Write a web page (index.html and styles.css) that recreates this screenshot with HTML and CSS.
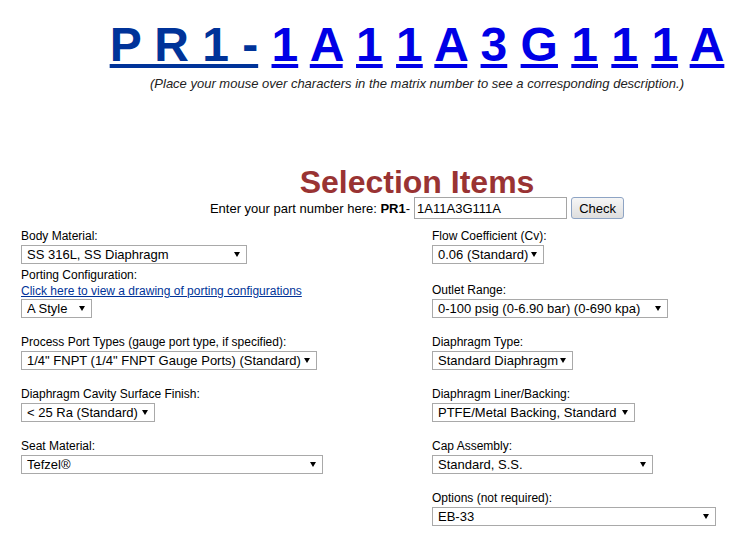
FILE: index.html
```html
<!DOCTYPE html>
<html lang="en">
<head>
  <meta charset="UTF-8" />
  <meta name="viewport" content="width=device-width, initial-scale=1.0" />
  <title>PR1 Part Number Selection</title>
  <link rel="stylesheet" href="styles.css">
</head>
<body>
  <div class="page">
    <div class="top">
      <div class="matrix">
        <a href="#" class="prefix">P R 1 -</a>
        <a href="#">1</a>
        <a href="#">A</a>
        <a href="#">1</a>
        <a href="#">1</a>
        <a href="#">A</a>
        <a href="#">3</a>
        <a href="#">G</a>
        <a href="#">1</a>
        <a href="#">1</a>
        <a href="#">1</a>
        <a href="#">A</a>
      </div>
      <p class="hint">(Place your mouse over characters in the matrix number to see a corresponding description.)</p>

      <h1 class="title">Selection Items</h1>
      <form class="part-form" onsubmit="return false;">
        <span>Enter your part number here: <b>PR1</b>-</span>
        <input type="text" id="part-number" value="1A11A3G111A" />
        <button type="button">Check</button>
      </form>
    </div>

    <div class="fields">
      <!-- row 1 -->
      <div class="cell">
        <div class="field">
          <label>Body Material:</label>
          <span class="dd"><select class="w-body"><option>SS 316L, SS Diaphragm</option></select></span>
        </div>
        <div class="field porting">
          <label>Porting Configuration:</label>
          <a href="#" class="drawing">Click here to view a drawing of porting configurations</a>
          <span class="dd"><select class="w-style"><option>A Style</option></select></span>
        </div>
      </div>
      <div class="cell">
        <div class="field">
          <label>Flow Coefficient (Cv):</label>
          <span class="dd"><select class="w-flow"><option>0.06 (Standard)</option></select></span>
        </div>
        <div class="field outlet">
          <label>Outlet Range:</label>
          <span class="dd"><select class="w-outlet"><option>0-100 psig (0-6.90 bar) (0-690 kpa)</option></select></span>
        </div>
      </div>

      <!-- row 2 -->
      <div class="cell">
        <div class="field">
          <label>Process Port Types (gauge port type, if specified):</label>
          <span class="dd"><select class="w-process"><option>1/4" FNPT (1/4" FNPT Gauge Ports) (Standard)</option></select></span>
        </div>
      </div>
      <div class="cell">
        <div class="field">
          <label>Diaphragm Type:</label>
          <span class="dd"><select class="w-dtype"><option>Standard Diaphragm</option></select></span>
        </div>
      </div>

      <!-- row 3 -->
      <div class="cell">
        <div class="field">
          <label>Diaphragm Cavity Surface Finish:</label>
          <span class="dd"><select class="w-cavity"><option>&lt; 25 Ra (Standard)</option></select></span>
        </div>
      </div>
      <div class="cell">
        <div class="field">
          <label>Diaphragm Liner/Backing:</label>
          <span class="dd"><select class="w-liner"><option>PTFE/Metal Backing, Standard</option></select></span>
        </div>
      </div>

      <!-- row 4 -->
      <div class="cell">
        <div class="field">
          <label>Seat Material:</label>
          <span class="dd"><select class="w-seat"><option>Tefzel®</option></select></span>
        </div>
      </div>
      <div class="cell">
        <div class="field">
          <label>Cap Assembly:</label>
          <span class="dd"><select class="w-cap"><option>Standard, S.S.</option></select></span>
        </div>
      </div>

      <!-- row 5 -->
      <div class="cell"></div>
      <div class="cell">
        <div class="field">
          <label>Options (not required):</label>
          <span class="dd"><select class="w-options"><option>EB-33</option></select></span>
        </div>
      </div>
    </div>
  </div>
</body>
</html>
```

FILE: styles.css
```css
body {
  margin: 8px;
  background-color: #fff;
  color: #000;
  font-family: "Liberation Sans", Arial, sans-serif;
}
.page {
  width: 724px;
}
.top {
  padding-left: 94px;
}
.matrix {
  padding-top: 9px;
  text-align: center;
  font-size: 48px;
  font-weight: bold;
  white-space: nowrap;
}
.matrix a {
  color: #0000e6;
}
.matrix a.prefix {
  color: #003399;
}
.hint {
  margin: 4px 0 0;
  text-align: center;
  font-size: 13px;
  font-style: italic;
  color: #222;
  white-space: nowrap;
}
.title {
  margin: 75px 0 0;
  text-align: center;
  font-size: 32px;
  line-height: 32px;
  color: #993333;
}
.part-form {
  display: flex;
  justify-content: center;
  align-items: center;
  gap: 4px;
  margin: -1px 0 0;
  font-size: 13px;
}
.part-form input {
  box-sizing: border-box;
  width: 153px;
  height: 22px;
  padding: 0 2px;
  border: 1px solid #a5a5a5;
  font-family: "Liberation Sans", Arial, sans-serif;
  font-size: 13px;
  color: #000;
}
.part-form button {
  box-sizing: border-box;
  width: 53px;
  height: 22px;
  padding: 0;
  border: 1px solid #8ea4c4;
  border-radius: 3px;
  background: linear-gradient(#f6f6f6, #dedede);
  font-family: "Liberation Sans", Arial, sans-serif;
  font-size: 13px;
  color: #000;
  cursor: pointer;
}
.fields {
  display: grid;
  grid-template-columns: 411px 1fr;
  row-gap: 17px;
  align-items: end;
  margin-top: 10px;
  padding-left: 13px;
}
.cell {
  display: flex;
  flex-direction: column;
}
.field {
  display: flex;
  flex-direction: column;
  align-items: flex-start;
}
.field label {
  font-size: 12px;
  line-height: 15px;
  margin-bottom: 1px;
}
.porting {
  margin-top: 4px;
}
.outlet {
  margin-top: 19px;
}
.drawing {
  font-size: 12px;
  line-height: 15px;
  color: #003399;
}
.dd {
  position: relative;
  display: inline-block;
}
.dd::after {
  content: "";
  position: absolute;
  right: 7px;
  top: 7px;
  border-left: 3px solid transparent;
  border-right: 3px solid transparent;
  border-top: 5px solid #000;
  pointer-events: none;
}
.dd select {
  -webkit-appearance: none;
  appearance: none;
  box-sizing: border-box;
  display: block;
  height: 19px;
  padding: 0 12px 0 5px;
  border: 1px solid #a9a9a9;
  border-radius: 0;
  background-color: #fff;
  color: #000;
  font-family: "Liberation Sans", Arial, sans-serif;
  font-size: 13px;
  line-height: 17px;
}
.w-body { width: 226px; }
.w-style { width: 71px; }
.w-process { width: 296px; }
.w-cavity { width: 134px; }
.w-seat { width: 302px; }
.w-flow { width: 112px; }
.w-outlet { width: 236px; }
.w-dtype { width: 141px; }
.w-liner { width: 203px; }
.w-cap { width: 221px; }
.w-options { width: 284px; }
```
